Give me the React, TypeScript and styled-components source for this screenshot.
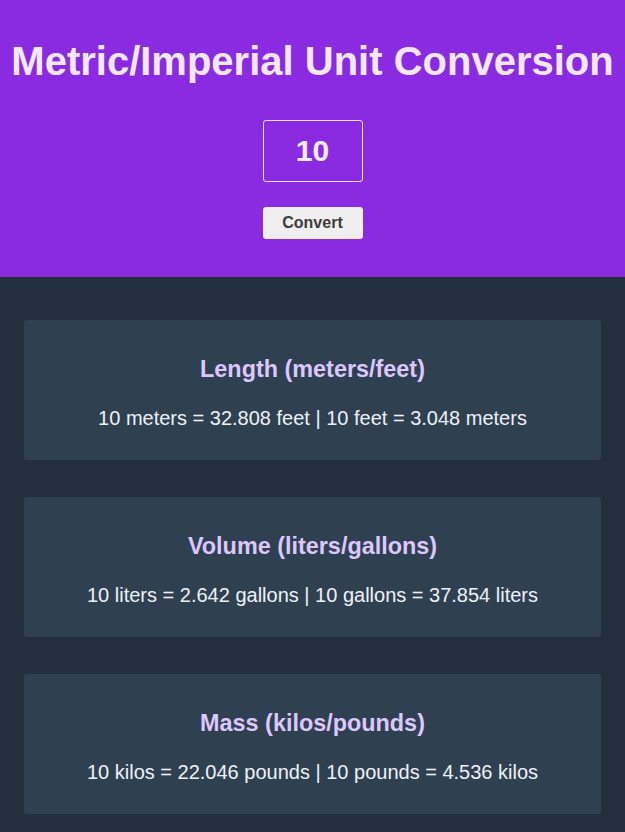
import React from "react";
import styled, { createGlobalStyle } from "styled-components";

const Global = createGlobalStyle`
  html, body { margin: 0; padding: 0; background: #232f3f; }
  body { font-family: "Liberation Sans", Arial, sans-serif; }
  input[type=number]::-webkit-inner-spin-button,
  input[type=number]::-webkit-outer-spin-button { -webkit-appearance: none; margin: 0; }
  input[type=number] { -moz-appearance: textfield; }
`;

const Page = styled.div`
  min-height: 832px;
  background: #232f3f;
`;

const Header = styled.header`
  background: #8a2be2;
  height: 277px;
  box-sizing: border-box;
  padding-top: 38px;
  display: flex;
  flex-direction: column;
  align-items: center;
`;

const Title = styled.h1`
  margin: 0;
  font-size: 40px;
  line-height: 46px;
  font-weight: 700;
  color: #f2e8fb;
  text-align: center;
`;

const NumberInput = styled.input`
  margin-top: 36px;
  width: 100px;
  height: 62px;
  box-sizing: border-box;
  padding: 0;
  border: 1px solid #f0e0ff;
  border-radius: 3px;
  background: transparent;
  color: #f6eefc;
  font-family: "Liberation Sans", Arial, sans-serif;
  font-size: 30px;
  font-weight: 700;
  text-align: center;
  outline: none;
`;

const Button = styled.button`
  margin-top: 25px;
  width: 100px;
  height: 32px;
  border: none;
  border-radius: 3px;
  background: #efefef;
  color: #3c3c3c;
  font-family: "Liberation Sans", Arial, sans-serif;
  font-size: 16px;
  font-weight: 700;
  cursor: pointer;
`;

const Cards = styled.main`
  padding: 43px 24px 19px;
  display: flex;
  flex-direction: column;
  gap: 37px;
`;

const Card = styled.section`
  background: #2f4051;
  border-radius: 3px;
  height: 140px;
  box-sizing: border-box;
  padding-top: 36px;
  text-align: center;
`;

const CardTitle = styled.h3`
  margin: 0;
  font-size: 23.4px;
  line-height: 27px;
  font-weight: 700;
  color: #dcc7ff;
`;

const CardText = styled.p`
  margin: 24px 0 0;
  font-size: 20px;
  line-height: 23px;
  color: #eef2f7;
`;

const rows = [
  {
    title: "Length (meters/feet)",
    text: "10 meters = 32.808 feet | 10 feet = 3.048 meters",
  },
  {
    title: "Volume (liters/gallons)",
    text: "10 liters = 2.642 gallons | 10 gallons = 37.854 liters",
  },
  {
    title: "Mass (kilos/pounds)",
    text: "10 kilos = 22.046 pounds | 10 pounds = 4.536 kilos",
  },
];

export default function App() {
  return (
    <Page>
      <Global />
      <Header>
        <Title>Metric/Imperial Unit Conversion</Title>
        <NumberInput type="number" defaultValue={10} />
        <Button>Convert</Button>
      </Header>
      <Cards>
        {rows.map((r) => (
          <Card key={r.title}>
            <CardTitle>{r.title}</CardTitle>
            <CardText>{r.text}</CardText>
          </Card>
        ))}
      </Cards>
    </Page>
  );
}
